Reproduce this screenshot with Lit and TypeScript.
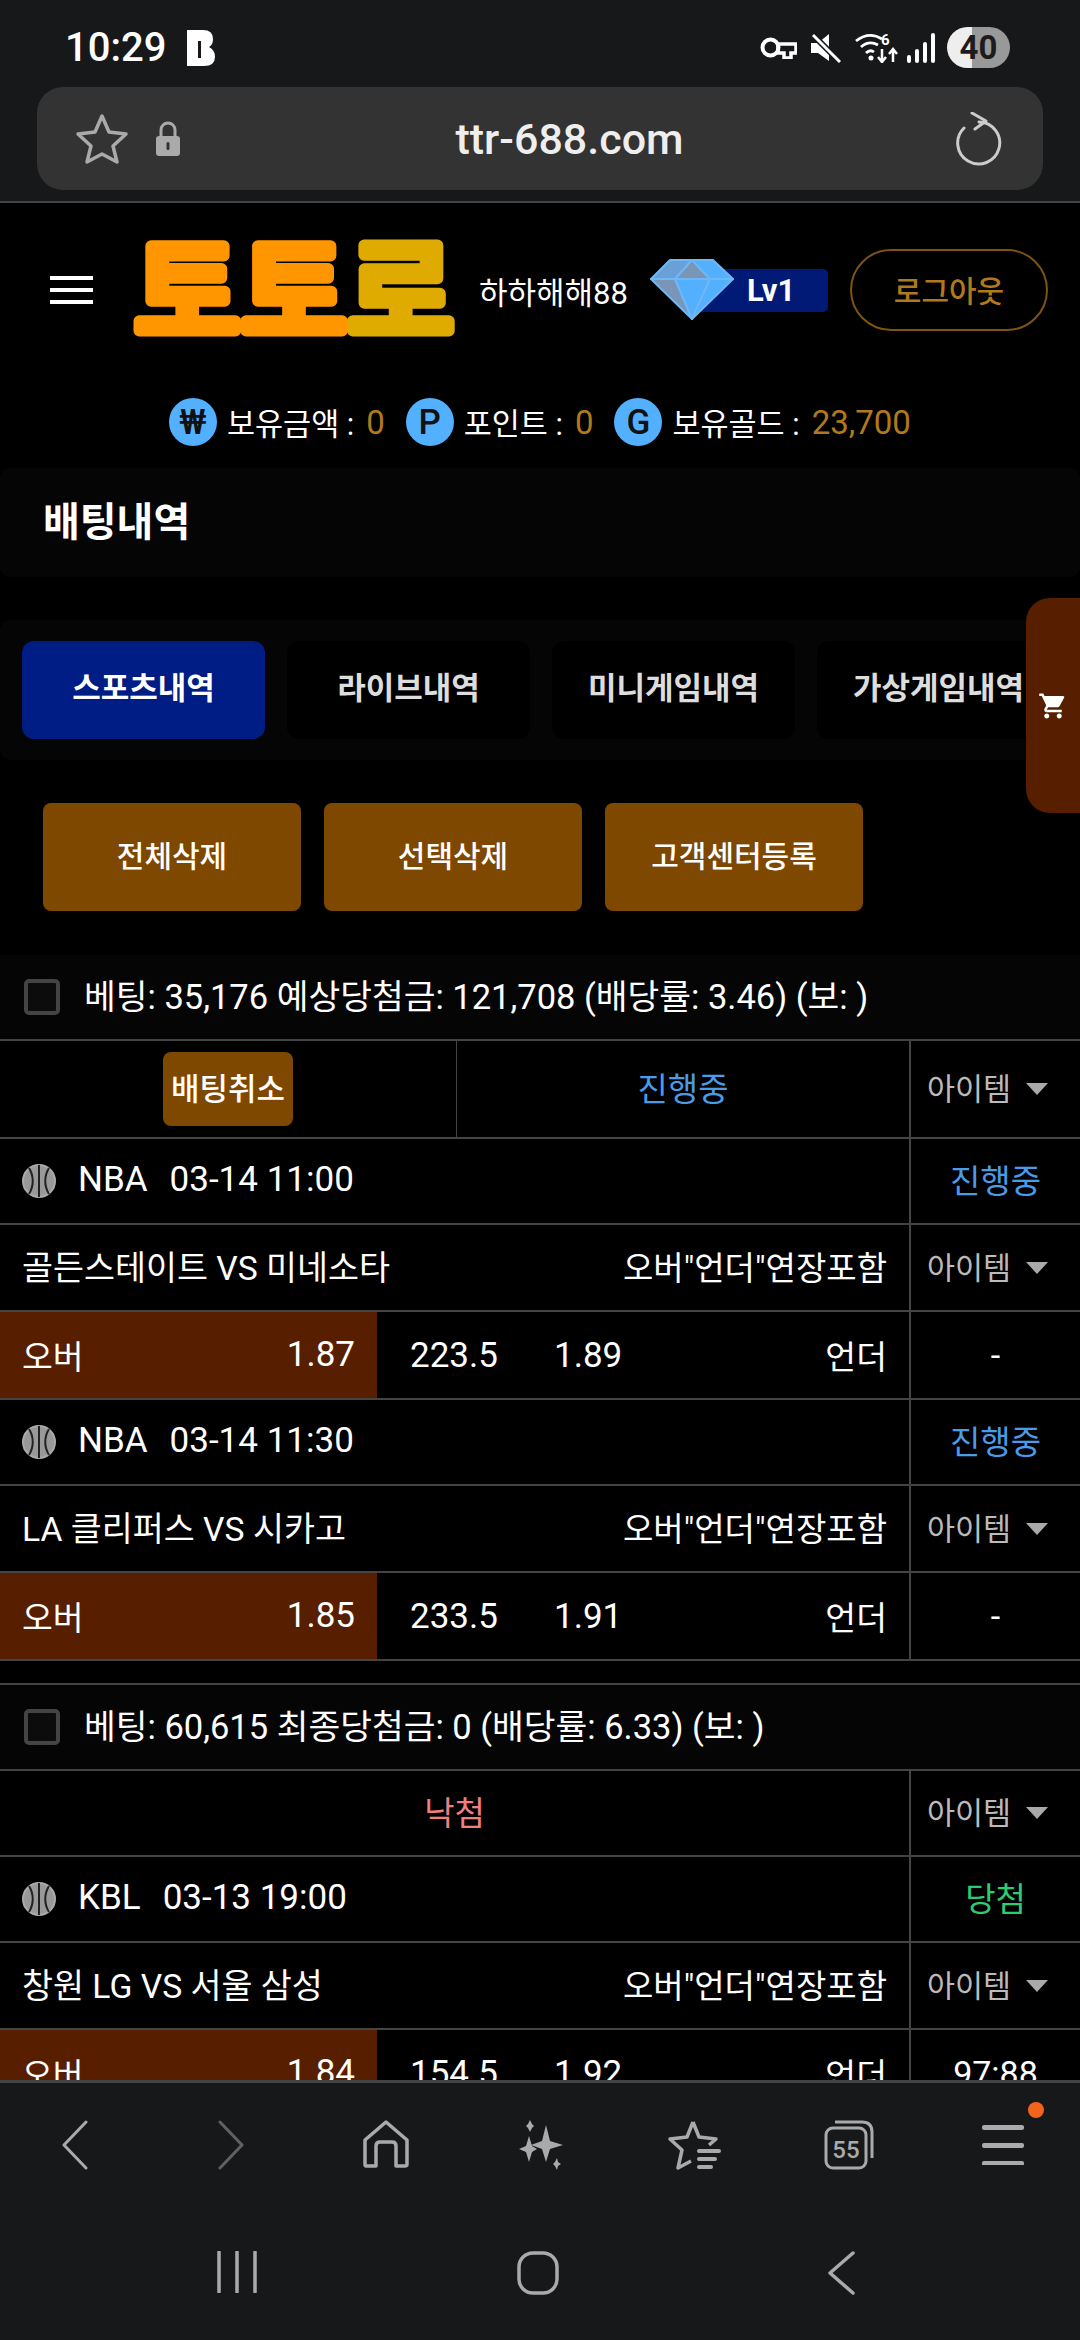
import { LitElement, html, css, svg } from "lit";
import { customElement } from "lit/decorators.js";

interface Game { league: string; time: string; status: string; statusCls: string; teams: string; over: string; line: string; under: string; score: string; }
interface Slip { summary: string; status: string; statusCls: string; cancel: boolean; games: Game[]; }

const slips: Slip[] = [
  {
    summary: "베팅: 35,176 예상당첨금: 121,708 (배당률: 3.46) (보: )",
    status: "진행중", statusCls: "blue", cancel: true,
    games: [
      { league: "NBA", time: "03-14 11:00", status: "진행중", statusCls: "blue", teams: "골든스테이트 VS 미네소타", over: "1.87", line: "223.5", under: "1.89", score: "-" },
      { league: "NBA", time: "03-14 11:30", status: "진행중", statusCls: "blue", teams: "LA 클리퍼스 VS 시카고", over: "1.85", line: "233.5", under: "1.91", score: "-" },
    ],
  },
  {
    summary: "베팅: 60,615 최종당첨금: 0 (배당률: 6.33) (보: )",
    status: "낙첨", statusCls: "red", cancel: false,
    games: [
      { league: "KBL", time: "03-13 19:00", status: "당첨", statusCls: "green", teams: "창원 LG VS 서울 삼성", over: "1.84", line: "154.5", under: "1.92", score: "97:88" },
    ],
  },
];

const ball = svg`<svg class="ball" viewBox="0 0 34 34"><circle cx="17" cy="17" r="16" fill="#999" stroke="#aaa" stroke-width="2"/><path d="M17 1v32M7 4c5 8 5 18 0 26M27 4c-5 8-5 18 0 26" fill="none" stroke="#222" stroke-width="2"/></svg>`;

@customElement("app-root")
export class AppRoot extends LitElement {
  static styles = css`
    :host { display: block; width: 1080px; height: 2340px; overflow: hidden; background: #000; color: #fff; font-family: Roboto, "Noto Sans CJK KR", sans-serif; font-size: 35px; }
    * { box-sizing: border-box; }
    svg { display: block; flex: none; }
    .root { position: relative; display: flex; flex-direction: column; height: 2340px; }

    .chrome { flex: none; background: #17181a; border-bottom: 2px solid #444; height: 203px; padding: 0 37px; display: flex; flex-direction: column; }
    .status { height: 87px; display: flex; align-items: center; padding: 8px 0 0 28px; }
    .time { font-size: 40px; font-weight: 500; width: 122px; line-height: 44px; }
    .status-right { margin-left: auto; display: flex; align-items: center; padding-right: 33px; }
    .batt { width: 63px; height: 41px; border-radius: 21px; margin-left: 12px; background: linear-gradient(90deg, #eee 0 25px, #999 25px); color: #1c1c1e; font-size: 33px; font-weight: 700; display: flex; align-items: center; justify-content: center; line-height: 1; }
    .url { height: 103px; border-radius: 26px; background: #333; display: flex; align-items: center; padding: 0 41px 0 38px; }
    .url-text { flex: 1; text-align: center; font-size: 43px; font-weight: 500; color: #eee; margin-left: 2px; }

    .page { flex: 1; min-height: 0; overflow: hidden; }
    .header { height: 174px; display: flex; align-items: center; padding-left: 50px; }
    .logo { margin-left: 40px; overflow: visible; }
    .logo text { font-family: "Noto Sans CJK KR", sans-serif; font-weight: 500; font-size: 100px; stroke-width: 10px; stroke-linejoin: round; stroke-linecap: round; paint-order: stroke; }
    .o1 { fill: #FF9600; stroke: #FF9600; }
    .o2 { fill: #E0AB00; stroke: #E0AB00; }
    .name { margin-left: 24px; font-size: 31px; width: 171px; white-space: nowrap; }
    .level { display: flex; align-items: center; width: 178px; }
    .lv { margin-left: -44px; width: 139px; height: 43px; border-radius: 5px; background: #001a75; font-size: 31px; font-weight: 700; display: flex; align-items: center; padding-left: 57px; }
    .logout { margin-left: 22px; width: 198px; height: 82px; border-radius: 41px; border: 2px solid #7d5414; color: #b07a1c; font-size: 30px; font-weight: 500; display: flex; align-items: center; justify-content: center; padding-bottom: 3px; }

    .balance { height: 48px; margin-top: 21px; display: flex; align-items: center; padding-left: 169px; font-size: 30.500px; }
    .coin { width: 48px; height: 48px; border-radius: 50%; background: #52b0ff; color: #111; display: flex; align-items: center; justify-content: center; font-size: 35px; font-weight: 500; }
    .b-label { margin-left: 10px; white-space: nowrap; }
    .b-val { color: #b07a1c; margin-left: 12px; font-size: 33px; }
    .b-item { display: flex; align-items: center; margin-right: 21px; }

    .title { height: 109px; margin-top: 22px; background: #050505; border-radius: 10px; padding: 0 0 8px 43px; display: flex; align-items: center; font-size: 40px; font-weight: 700; }

    .tabs { height: 140px; margin-top: 43px; background: #050505; border-radius: 10px; padding: 21px 0 21px 22px; display: flex; gap: 22px; overflow: hidden; }
    .tab { flex: none; width: 243px; height: 98px; border-radius: 12px; background: #000; color: #ddd; font-weight: 700; font-size: 31px; display: flex; align-items: center; justify-content: center; padding-bottom: 10px; }
    .tab.on { background: #001c85; color: #fff; }
    .cart { position: absolute; right: 0; top: 598px; width: 54px; height: 215px; background: #571f00; border-radius: 24px 0 0 24px; display: flex; align-items: center; justify-content: center; }

    .actions { display: flex; gap: 23px; padding-left: 43px; margin-top: 43px; }
    .act { width: 258px; height: 108px; border-radius: 8px; background: #7f4800; font-size: 30px; font-weight: 500; display: flex; align-items: center; justify-content: center; padding-bottom: 6px; }

    .slips { margin-top: 44px; display: flex; flex-direction: column; gap: 22px; }
    .slip-head { height: 86px; background: #050505; border-bottom: 2px solid #444; display: flex; align-items: center; padding-left: 24px; gap: 24px; white-space: nowrap; font-size: 34.500px; }
    .slip-head span:last-child { padding-bottom: 6px; }
    .slip:nth-child(2) { border-top: 2px solid #444; }
    .check { width: 36px; height: 36px; border: 4px solid #444; border-radius: 5px; background: #0c0c0c; }
    .row { display: grid; grid-template-columns: 1fr 171px; border-bottom: 2px solid #444; height: 86px; }
    .row.match { height: 87px; }
    .row.odds { height: 88px; }
    .row.with-cancel { height: 98px; }
    .main { min-width: 0; display: flex; align-items: center; padding: 0 22px 4px; justify-content: space-between; }
    .main.split { padding: 0; display: grid; grid-template-columns: 456px 1fr; }
    .main.odds-main { padding: 0; justify-content: flex-start; }
    .side { border-left: 2px solid #444; display: flex; align-items: center; justify-content: center; font-size: 33px; padding-bottom: 4px; }
    .side.num { font-size: 34px; padding-bottom: 0; }
    .cell { height: 100%; display: flex; align-items: center; justify-content: center; font-size: 33px; padding-bottom: 4px; }
    .cell + .cell { border-left: 1px solid #444; }
    .split .cell:first-child { padding-bottom: 0; }
    .cancel { width: 130px; height: 74px; border-radius: 8px; background: #7f4800; font-size: 31px; font-weight: 500; display: flex; align-items: center; justify-content: center; white-space: nowrap; padding-bottom: 5px; }
    .blue { color: #4a9be8; }
    .red { color: #f08080; }
    .green { color: #2ecc71; }
    .center { width: 100%; text-align: center; font-size: 33px; }
    .match .main span:first-child { font-size: 33.700px; }
    .match .main span:last-child { font-size: 33px; }
    .item { color: #bbb; gap: 15px; font-size: 30.500px; padding-right: 16px; }
    .item i { width: 0; height: 0; border-left: 11px solid transparent; border-right: 11px solid transparent; border-top: 12px solid #aaa; margin-top: 4px; }
    .league { display: flex; align-items: center; }
    .ball { width: 34px; height: 34px; margin-right: 22px; margin-top: 4px; }
    .league b { font-weight: 400; margin-right: 22px; }
    .over { width: 377px; height: 100%; background: #571f00; display: flex; align-items: center; justify-content: space-between; padding: 0 22px 2px; flex: none; }
    .over span:first-child { font-size: 33.500px; }
    .ln { margin-left: 33px; width: 144px; }
    .under-label { margin-left: auto; padding: 0 22px 2px 0; font-size: 33.500px; }

    .bottom { flex: none; height: 260px; background: #17181a; border-top: 3px solid #444; display: flex; flex-direction: column; }
    .nav1 { height: 120px; padding-top: 37px; display: grid; grid-template-columns: repeat(7, 1fr); justify-items: center; align-items: start; }
    .nav2 { flex: 1; display: flex; justify-content: center; padding: 48px 8px 0 0; }
    .menu { position: relative; }
    .dot { position: absolute; width: 16px; height: 16px; border-radius: 50%; background: #f2641e; left: 46px; top: -18px; }
  `;

  private game(g: Game) {
    return html`
      <div class="row">
        <div class="main"><div class="league">${ball}<b>${g.league}</b><span>${g.time}</span></div></div>
        <div class="side"><span class=${g.statusCls}>${g.status}</span></div>
      </div>
      <div class="row match">
        <div class="main"><span>${g.teams}</span><span>오버"언더"연장포함</span></div>
        <div class="side item">아이템<i></i></div>
      </div>
      <div class="row odds">
        <div class="main odds-main">
          <div class="over"><span>오버</span><span>${g.over}</span></div>
          <span class="ln">${g.line}</span><span>${g.under}</span>
          <span class="under-label">언더</span>
        </div>
        <div class="side num">${g.score}</div>
      </div>`;
  }

  private slip(s: Slip) {
    return html`
      <section class="slip">
        <div class="slip-head"><span class="check"></span><span>${s.summary}</span></div>
        <div class="row ${s.cancel ? "with-cancel" : ""}">
          ${s.cancel
            ? html`<div class="main split"><div class="cell"><div class="cancel">배팅취소</div></div><div class="cell"><span class=${s.statusCls}>${s.status}</span></div></div>`
            : html`<div class="main"><span class="center ${s.statusCls}">${s.status}</span></div>`}
          <div class="side item">아이템<i></i></div>
        </div>
        ${s.games.map((g) => this.game(g))}
      </section>`;
  }

  render() {
    return html`<div class="root">
      <div class="chrome">
        <div class="status">
          <span class="time">10:29</span>
          <svg width="28" height="36" viewBox="0 0 28 36"><path d="M0 0H16Q26 0 26 9Q26 15 22 17Q28 20 28 27Q28 36 17 36H0Z" fill="#fff"/><rect x="11" y="11" width="3" height="17" fill="#17181a"/></svg>
          <div class="status-right">
            <svg width="37" height="22" viewBox="0 0 37 22"><circle cx="10.500" cy="10.500" r="8" fill="none" stroke="#fff" stroke-width="4"/><path d="M18 7H36V16H31V21H24V16H18Z" fill="none" stroke="#fff" stroke-width="3.500"/></svg>
            <svg style="margin-left:14px" width="30" height="30" viewBox="0 0 30 30"><path d="M0 10H7L18 1V28L7 20H0Z" fill="#fff"/><path d="M2 2L29 29" stroke="#17181a" stroke-width="6"/><path d="M2 2L29 29" stroke="#fff" stroke-width="3"/></svg>
            <svg style="margin-left:14px" width="44" height="31" viewBox="0 0 44 31"><path d="M1 9Q14 -1 27 7M6 15Q14 8 23 13M11 21Q15 17 19 20" fill="none" stroke="#fff" stroke-width="2.800"/><circle cx="16" cy="26" r="2.500" fill="#fff"/><text x="26" y="13" font-size="15" font-weight="700" fill="#fff">6</text><path d="M27 17V29M23 25L27 30L31 25M38 30V19M34 22L38 17L42 22" fill="none" stroke="#fff" stroke-width="2.500"/></svg>
            <svg style="margin-left:8px" width="28" height="30" viewBox="0 0 28 30"><rect x="0" y="22" width="4" height="8" rx="2" fill="#fff"/><rect x="8" y="16" width="4" height="14" rx="2" fill="#fff"/><rect x="16" y="9" width="4" height="21" rx="2" fill="#fff"/><rect x="24" y="0" width="4" height="30" rx="2" fill="#fff"/></svg>
            <div class="batt">40</div>
          </div>
        </div>
        <div class="url">
          <svg width="54" height="52" viewBox="0 0 54 52"><path d="M27 3L34 19L51 21L38 33L42 49L27 41L12 49L16 33L3 21L20 19Z" fill="none" stroke="#aaa" stroke-width="3.500" stroke-linejoin="round"/></svg>
          <svg style="margin-left:26px" width="26" height="35" viewBox="0 0 26 35"><path d="M6 16V9a7 7 0 0 1 14 0V16" fill="none" stroke="#aaa" stroke-width="3"/><rect x="1" y="15" width="24" height="20" rx="3" fill="#aaa"/><rect x="11.500" y="21" width="3" height="8" rx="1.500" fill="#333"/></svg>
          <span class="url-text">ttr-688.com</span>
          <svg width="46" height="54" viewBox="0 0 46 54"><path d="M23 10A21 21 0 1 1 8 16" fill="none" stroke="#ccc" stroke-width="3" stroke-linecap="round"/><path d="M16 1L30 9L19 17" fill="none" stroke="#ccc" stroke-width="3" stroke-linecap="round" stroke-linejoin="round"/></svg>
        </div>
      </div>

      <div class="page">
        <div class="header">
          <svg width="43" height="28" viewBox="0 0 43 28"><rect width="43" height="4" fill="#fff"/><rect y="12" width="43" height="4" fill="#fff"/><rect y="24" width="43" height="4" fill="#fff"/></svg>
          <svg class="logo" width="322" height="130" viewBox="0 0 322 130">
            <text transform="translate(1 108) scale(1.16 1.14)"><tspan class="o1">토토</tspan><tspan class="o2">로</tspan></text>
          </svg>
          <span class="name">하하해해88</span>
          <div class="level">
            <svg width="84" height="62" viewBox="0 0 84 62" style="position:relative;z-index:1"><g stroke="#6fb7f5" stroke-width="2" stroke-linejoin="round"><path d="M20 1H42L25 20H1Z" fill="#6a9fd8"/><path d="M42 1L60 20H25Z" fill="#7a95b5"/><path d="M42 1H63L83 20H60Z" fill="#52b0ff"/><path d="M1 20H25L42 60Z" fill="#7a95b5"/><path d="M25 20H60L42 60Z" fill="#52b0ff"/><path d="M60 20H83L42 60Z" fill="#52b0ff"/></g></svg>
            <div class="lv">Lv1</div>
          </div>
          <div class="logout">로그아웃</div>
        </div>

        <div class="balance">
          <div class="b-item"><span class="coin">₩</span><span class="b-label">보유금액 :</span><span class="b-val">0</span></div>
          <div class="b-item"><span class="coin">P</span><span class="b-label">포인트 :</span><span class="b-val">0</span></div>
          <div class="b-item"><span class="coin">G</span><span class="b-label">보유골드 :</span><span class="b-val">23,700</span></div>
        </div>

        <div class="title">배팅내역</div>

        <div class="tabs">
          <div class="tab on">스포츠내역</div><div class="tab">라이브내역</div><div class="tab">미니게임내역</div><div class="tab">가상게임내역</div>
        </div>

        <div class="actions"><div class="act">전체삭제</div><div class="act">선택삭제</div><div class="act">고객센터등록</div></div>

        <div class="slips">${slips.map((s) => this.slip(s))}</div>
      </div>

      <div class="cart"><svg width="30" height="30" viewBox="0 0 24 24"><path d="M7 18c-1.100 0-2 .9-2 2s.9 2 2 2 2-.9 2-2-.9-2-2-2zM1 2v2h2l3.600 7.590-1.350 2.450c-.16.28-.25.61-.25.96 0 1.100.9 2 2 2h12v-2H7.420c-.14 0-.25-.11-.25-.25l.03-.12.9-1.630h7.450c.75 0 1.410-.41 1.750-1.030l3.580-6.490A1 1 0 0 0 20 4H5.210l-.94-2H1zm16 16c-1.100 0-2 .9-2 2s.9 2 2 2 2-.9 2-2-.9-2-2-2z" fill="#fff"/></svg></div>

      <div class="bottom">
        <div class="nav1">
          <svg width="28" height="50" viewBox="0 0 28 50" style="margin-right:4px"><path d="M25 2L3 25L25 48" fill="none" stroke="#aaa" stroke-width="3" stroke-linecap="round" stroke-linejoin="round"/></svg>
          <svg width="28" height="50" viewBox="0 0 28 50" style="opacity:.5"><path d="M3 2L25 25L3 48" fill="none" stroke="#aaa" stroke-width="3" stroke-linecap="round" stroke-linejoin="round"/></svg>
          <svg width="46" height="48" viewBox="0 0 46 48"><path d="M3 46Q2 46 2 44V20L23 2L44 20V44Q44 46 42 46H33V26Q33 22 29 22H17Q13 22 13 26V46Z" fill="none" stroke="#aaa" stroke-width="3.500" stroke-linejoin="round"/></svg>
          <svg width="46" height="50" viewBox="0 0 46 50"><path d="M29 5L33 21L46 25L33 29L29 42L25 29L14 25L25 21Z M12 16L15 26L20 29L15 32L12 42L9 32L2 29L9 26Z M13 0L15 4L17 6L15 8L13 12L11 8L9 6L11 4Z M40 38L41 42L44 44L41 46L40 50L38 46L36 44L38 42Z" fill="#aaa"/></svg>
          <svg width="54" height="50" viewBox="0 0 54 50"><path d="M26 2L32 17L49 19L42 25" fill="none" stroke="#aaa" stroke-width="3.500" stroke-linejoin="round"/><path d="M26 2L20 17L3 19L15 30L11 48L24 41" fill="none" stroke="#aaa" stroke-width="3.500" stroke-linejoin="round"/><path d="M32 31H52M32 39H48M32 47H44" stroke="#aaa" stroke-width="4" stroke-linecap="round"/></svg>
          <svg width="50" height="50" viewBox="0 0 50 50"><rect x="2" y="8" width="40" height="40" rx="7" fill="none" stroke="#aaa" stroke-width="3"/><path d="M11 2H38Q48 2 48 12V38" fill="none" stroke="#aaa" stroke-width="3"/><text x="22" y="38" text-anchor="middle" font-size="24" font-weight="500" fill="#aaa">55</text></svg>
          <div class="menu">
            <svg width="42" height="40" viewBox="0 0 42 40" style="margin-top:5px"><rect width="42" height="5" rx="2" fill="#aaa" y="0"/><rect width="42" height="5" rx="2" fill="#aaa" y="18"/><rect width="42" height="5" rx="2" fill="#aaa" y="36"/></svg>
            <span class="dot"></span>
          </div>
        </div>
        <div class="nav2">
          <svg style="margin-right:260px" width="40" height="42" viewBox="0 0 40 42"><path d="M2 1V41M20 1V41M38 1V41" stroke="#aaa" stroke-width="3.500" stroke-linecap="round"/></svg>
          <svg style="margin-right:268px" width="42" height="44" viewBox="0 0 42 44"><rect x="2" y="2" width="38" height="40" rx="14" fill="none" stroke="#aaa" stroke-width="3.500"/></svg>
          <svg width="28" height="44" viewBox="0 0 28 44"><path d="M26 2L3 22L26 42" fill="none" stroke="#aaa" stroke-width="3.500" stroke-linecap="round" stroke-linejoin="round"/></svg>
        </div>
      </div>
    </div>`;
  }
}
